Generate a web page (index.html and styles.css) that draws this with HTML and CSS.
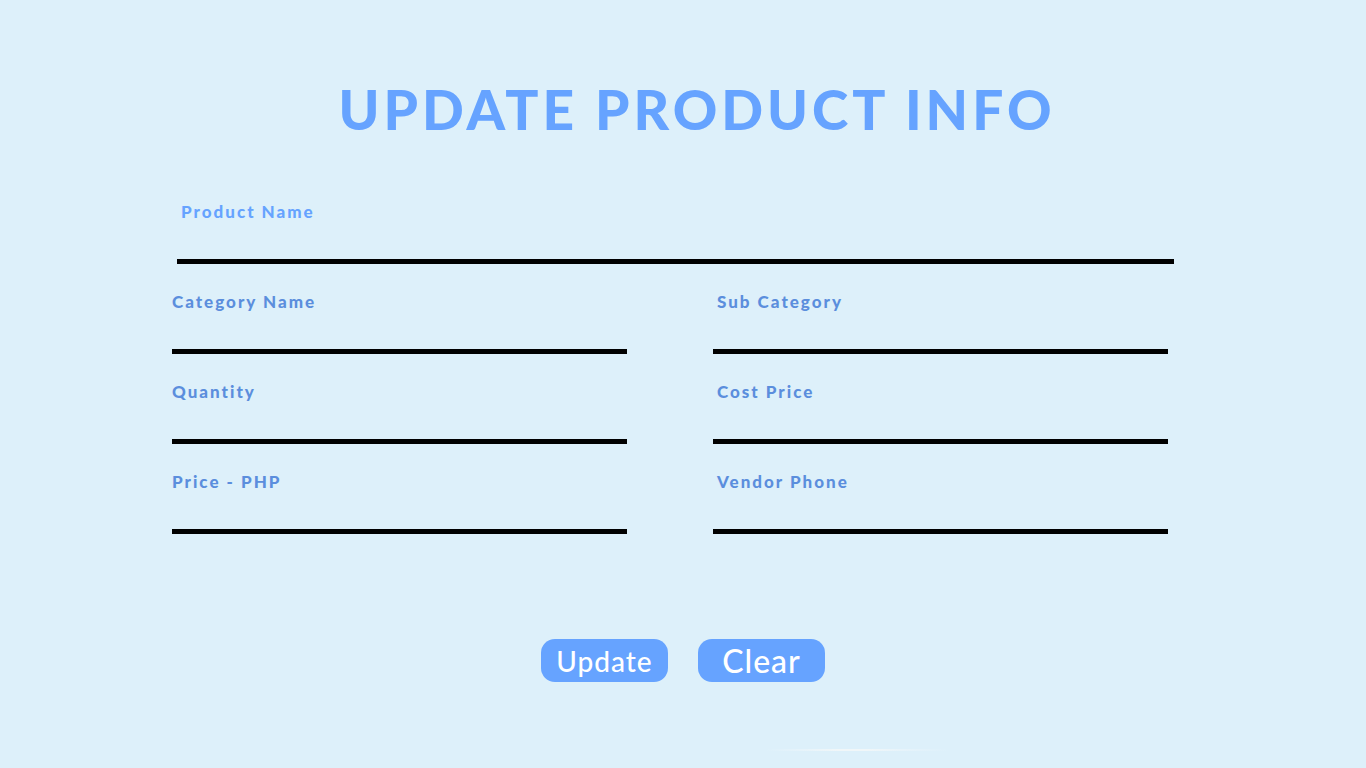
FILE: index.html
```html
<!DOCTYPE html>
<html lang="en">
<head>
  <meta charset="utf-8">
  <meta name="viewport" content="width=device-width, initial-scale=1">
  <title>Update Product Info</title>
  <link rel="stylesheet" href="styles.css">
</head>
<body>
  <main class="page">
    <h1 class="title">UPDATE PRODUCT INFO</h1>
    <form class="form">
      <div class="row row-main">
        <div class="field field-main">
          <label class="label" for="product">Product Name</label>
          <input class="input" id="product" type="text">
        </div>
      </div>
      <div class="row row-details">
        <div class="column">
          <div class="field">
            <label class="label" for="category">Category Name</label>
            <input class="input" id="category" type="text">
          </div>
          <div class="field">
            <label class="label" for="quantity">Quantity</label>
            <input class="input" id="quantity" type="text">
          </div>
          <div class="field">
            <label class="label" for="price">Price - PHP</label>
            <input class="input" id="price" type="text">
          </div>
        </div>
        <div class="column column-right">
          <div class="field">
            <label class="label" for="subcategory">Sub Category</label>
            <input class="input" id="subcategory" type="text">
          </div>
          <div class="field">
            <label class="label" for="cost">Cost Price</label>
            <input class="input" id="cost" type="text">
          </div>
          <div class="field">
            <label class="label" for="phone">Vendor Phone</label>
            <input class="input" id="phone" type="tel">
          </div>
        </div>
      </div>
      <div class="actions">
        <button class="button" type="button">Update</button>
        <button class="button button-clear" type="reset">Clear</button>
      </div>
    </form>
    <div class="glow"></div>
  </main>
</body>
</html>
```

FILE: styles.css
```css
* {
  box-sizing: border-box;
}

body {
  margin: 0;
  min-height: 100vh;
  background: #ddf0fa;
  font-family: Lato, "Open Sans", sans-serif;
}

.page {
  padding-top: 75px;
}

.title {
  margin: 0;
  padding-left: 28px;
  color: #66a3ff;
  font-size: 55px;
  font-weight: 900;
  line-height: 68px;
  letter-spacing: 4px;
  text-align: center;
}

.form {
  display: flex;
  flex-direction: column;
  gap: 28px;
  padding-top: 59px;
}

.row-main {
  padding: 0 192px 0 177px;
}

.row-details {
  display: grid;
  grid-template-columns: 1fr 1fr;
  gap: 86px;
  padding: 0 198px 0 172px;
}

.column {
  display: flex;
  flex-direction: column;
  gap: 28px;
}

.field {
  display: flex;
  flex-direction: column;
}

.label {
  color: #5b8edd;
  font-size: 17px;
  font-weight: 900;
  line-height: 20px;
  letter-spacing: 2px;
}

.field-main .label {
  padding-left: 4px;
  color: #66a3ff;
}

.column-right .label {
  padding-left: 4px;
}

.input {
  width: 100%;
  height: 42px;
  padding: 0 4px;
  border: 0;
  border-bottom: 5px solid #000;
  border-radius: 0;
  outline: 0;
  background: transparent;
  font: inherit;
  font-size: 17px;
}

.actions {
  display: flex;
  justify-content: center;
  gap: 30px;
  padding-top: 77px;
}

.button {
  min-width: 127px;
  height: 43px;
  padding: 0 12px;
  border: 0;
  border-radius: 14px;
  background: #66a3ff;
  color: #fff;
  font-family: inherit;
  font-size: 28px;
  font-weight: 500;
  line-height: 40px;
  letter-spacing: 1px;
}

.button-clear {
  font-size: 32px;
  line-height: 36px;
}

.glow {
  width: 184px;
  height: 2px;
  margin: 67px 0 0 56%;
  background: linear-gradient(90deg, transparent, #e6f3fa 20%, #f0f6f8 40%, #f0f6f8 55%, #e6f3fa 75%, transparent);
}
```
